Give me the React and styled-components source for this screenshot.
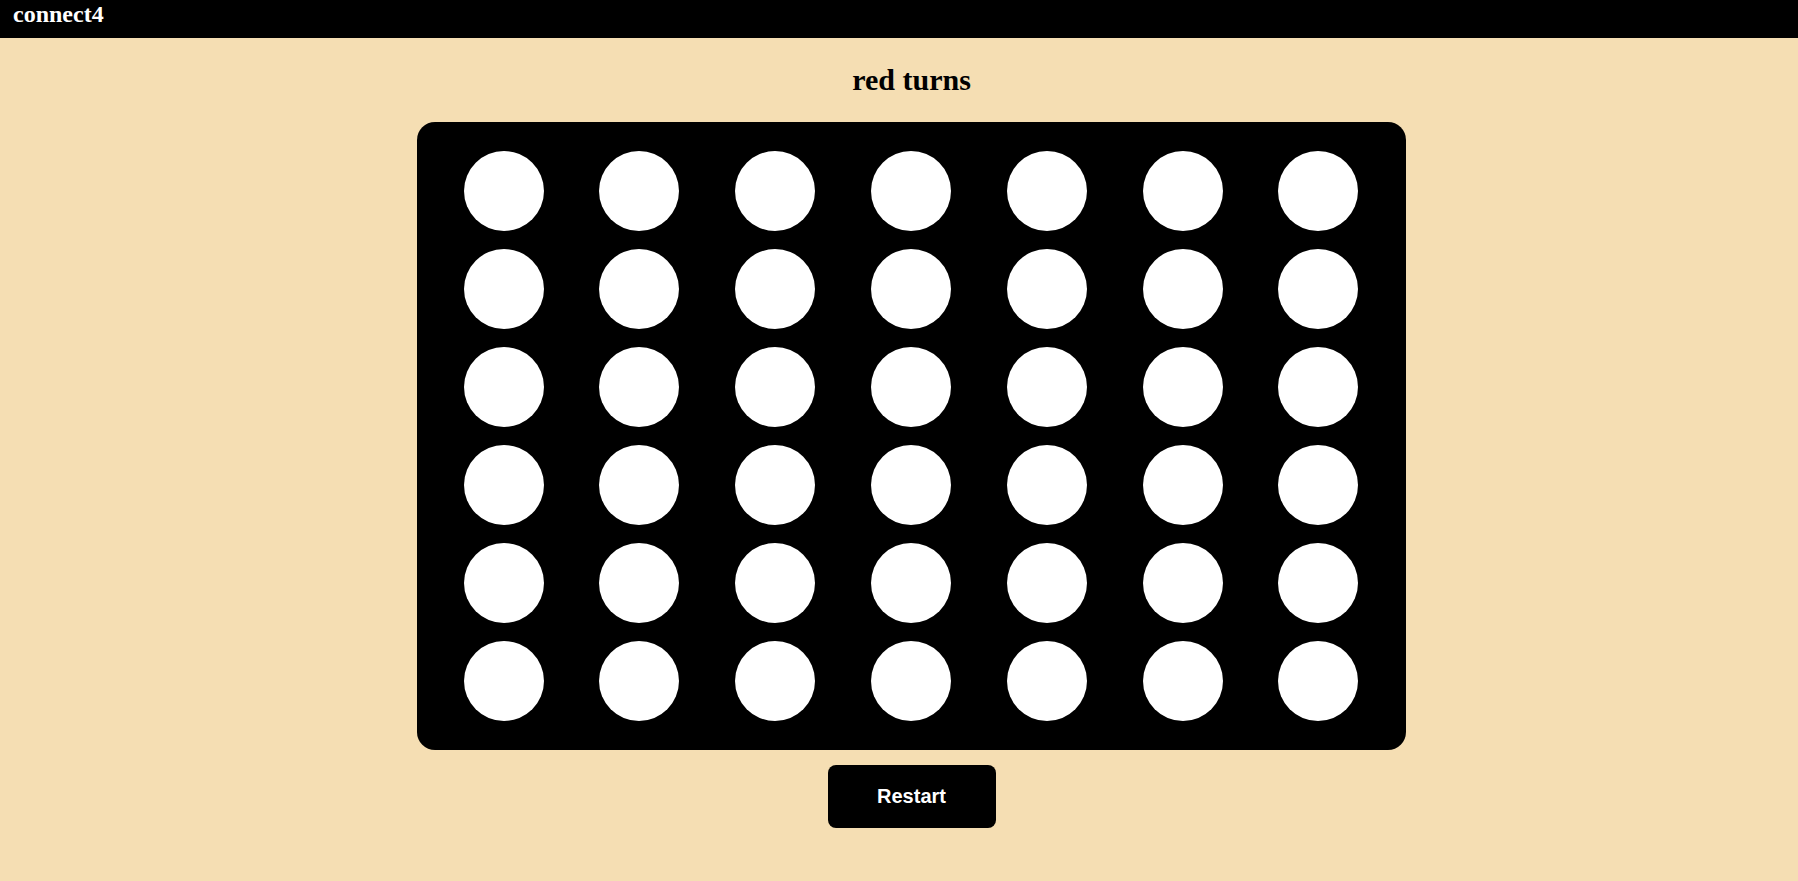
import React, { useState } from 'react';
import styled, { createGlobalStyle } from 'styled-components';

const ROWS = 6;
const COLS = 7;

const GlobalStyle = createGlobalStyle`
  html, body {
    margin: 0;
    padding: 0;
    background: #f5deb3;
  }
  body {
    font-family: "Liberation Serif", "Times New Roman", serif;
  }
`;

const Header = styled.header`
  height: 38px;
  background: #000;
  padding-left: 13px;
  display: flex;
  align-items: flex-start;
`;

const Logo = styled.h1`
  margin: 0;
  color: #fff;
  font-size: 24px;
  line-height: 28px;
  font-weight: bold;
`;

const Main = styled.main`
  display: flex;
  flex-direction: column;
  align-items: center;
  padding-left: 25px;
`;

const Status = styled.h2`
  margin: 25px 0 25px;
  font-size: 30px;
  line-height: 34px;
  font-weight: bold;
  color: #000;
`;

const Board = styled.div`
  display: grid;
  grid-template-columns: repeat(${COLS}, 80px);
  grid-auto-rows: 80px;
  column-gap: 55.8px;
  row-gap: 18px;
  padding: 29px 48px 29px 47px;
  background: #000;
  border-radius: 18px;
`;

const Cell = styled.div`
  width: 80px;
  height: 80px;
  border-radius: 50%;
  background: ${(p) => (p.$color === 'red' ? '#e0252b' : p.$color === 'yellow' ? '#f5d21f' : '#fff')};
  cursor: pointer;
`;

const RestartButton = styled.button`
  margin-top: 15px;
  width: 168px;
  height: 63px;
  border: none;
  border-radius: 8px;
  background: #000;
  color: #fff;
  font-family: "Liberation Sans", Arial, sans-serif;
  font-size: 20px;
  font-weight: bold;
  cursor: pointer;
`;

const emptyBoard = () => Array.from({ length: ROWS }, () => Array(COLS).fill(null));

export default function App() {
  const [grid, setGrid] = useState(emptyBoard);
  const [turn, setTurn] = useState('red');

  const drop = (col) => {
    // lowest empty slot in the column
    for (let r = ROWS - 1; r >= 0; r--) {
      if (!grid[r][col]) {
        const next = grid.map((row) => row.slice());
        next[r][col] = turn;
        setGrid(next);
        setTurn(turn === 'red' ? 'yellow' : 'red');
        return;
      }
    }
  };

  const restart = () => {
    setGrid(emptyBoard());
    setTurn('red');
  };

  return (
    <>
      <GlobalStyle />
      <Header>
        <Logo>connect4</Logo>
      </Header>
      <Main>
        <Status>{turn} turns</Status>
        <Board>
          {grid.map((row, r) =>
            row.map((cell, c) => (
              <Cell key={`${r}-${c}`} $color={cell} onClick={() => drop(c)} />
            ))
          )}
        </Board>
        <RestartButton onClick={restart}>Restart</RestartButton>
      </Main>
    </>
  );
}
